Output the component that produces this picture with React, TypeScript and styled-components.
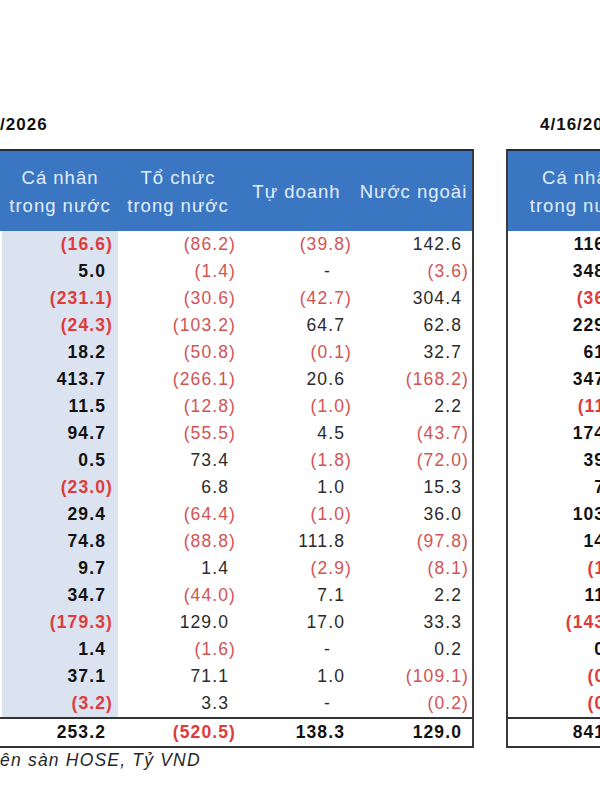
import React from "react";
import styled, { createGlobalStyle } from "styled-components";

const GlobalStyle = createGlobalStyle`
  html, body {
    margin: 0;
    padding: 0;
    background: #ffffff;
    overflow: hidden;
  }
  body {
    font-family: "Liberation Sans", Arial, sans-serif;
    color: #262626;
  }
`;

const heads = ["Cá nhân\ntrong nước", "Tổ chức\ntrong nước", "Tự doanh", "Nước ngoài"];

const leftRows = [
  ["(16.6)", "(86.2)", "(39.8)", "142.6"],
  ["5.0", "(1.4)", "-", "(3.6)"],
  ["(231.1)", "(30.6)", "(42.7)", "304.4"],
  ["(24.3)", "(103.2)", "64.7", "62.8"],
  ["18.2", "(50.8)", "(0.1)", "32.7"],
  ["413.7", "(266.1)", "20.6", "(168.2)"],
  ["11.5", "(12.8)", "(1.0)", "2.2"],
  ["94.7", "(55.5)", "4.5", "(43.7)"],
  ["0.5", "73.4", "(1.8)", "(72.0)"],
  ["(23.0)", "6.8", "1.0", "15.3"],
  ["29.4", "(64.4)", "(1.0)", "36.0"],
  ["74.8", "(88.8)", "111.8", "(97.8)"],
  ["9.7", "1.4", "(2.9)", "(8.1)"],
  ["34.7", "(44.0)", "7.1", "2.2"],
  ["(179.3)", "129.0", "17.0", "33.3"],
  ["1.4", "(1.6)", "-", "0.2"],
  ["37.1", "71.1", "1.0", "(109.1)"],
  ["(3.2)", "3.3", "-", "(0.2)"],
];
const leftTotal = ["253.2", "(520.5)", "138.3", "129.0"];

// previous session, only the first column shows inside the frame
const rightRows = [
  ["116.0", "(62.3)", "(18.4)", "(35.3)"],
  ["348.2", "(210.5)", "(4.1)", "(133.6)"],
  ["(36.7)", "12.9", "(3.0)", "26.8"],
  ["229.5", "(140.2)", "8.8", "(98.1)"],
  ["61.4", "(22.0)", "(1.2)", "(38.2)"],
  ["347.9", "(190.6)", "12.4", "(169.7)"],
  ["(11.3)", "4.2", "-", "7.1"],
  ["174.6", "(96.3)", "2.0", "(80.3)"],
  ["39.2", "(18.5)", "(0.4)", "(20.3)"],
  ["7.5", "(2.6)", "1.1", "(6.0)"],
  ["103.8", "(61.7)", "(2.2)", "(39.9)"],
  ["14.2", "(9.5)", "0.8", "(5.5)"],
  ["(1.9)", "3.4", "-", "(1.5)"],
  ["11.7", "(6.1)", "0.3", "(5.9)"],
  ["(143.5)", "88.2", "6.4", "48.9"],
  ["0.6", "(0.3)", "-", "(0.3)"],
  ["(0.4)", "0.9", "-", "(0.5)"],
  ["(0.8)", "0.5", "-", "0.3"],
];
const rightTotal = ["841.3", "(692.9)", "(8.2)", "(140.2)"];

const Page = styled.div`
  display: flex;
  align-items: flex-start;
  gap: 32px;
  width: max-content;
  margin-left: -80px;
  padding-top: 114px;
`;

const Block = styled.section`
  display: flex;
  flex-direction: column;
`;

const DateTitle = styled.h2<{ $indent: number }>`
  margin: 0 0 13px;
  padding-left: ${(p) => p.$indent}px;
  font-size: 17px;
  line-height: 22px;
  font-weight: 700;
  letter-spacing: 1px;
  color: #111111;
`;

const Table = styled.div<{ $cols: string; $edge: "left" | "right" }>`
  display: grid;
  grid-template-columns: ${(p) => p.$cols};
  border-top: 2px solid #1e2a44;
  border-bottom: 2px solid #333333;
  ${(p) => (p.$edge === "right" ? "border-right: 2px solid #3a3a3a;" : "border-left: 2px solid #3a3a3a;")}
`;

const HeadCell = styled.div`
  height: 80px;
  padding-top: 2px;
  box-sizing: border-box;
  display: flex;
  align-items: center;
  justify-content: center;
  background: #3a76c2;
  color: #e3eefb;
  font-size: 18.5px;
  line-height: 28px;
  letter-spacing: 1px;
  text-align: center;
  white-space: pre-line;
`;

const Cell = styled.div<{ $shade?: boolean; $pad: number; $total?: boolean }>`
  height: 27px;
  display: flex;
  align-items: center;
  justify-content: flex-end;
  padding-right: ${(p) => p.$pad}px;
  background: ${(p) => (p.$shade ? "#dbe3f1" : "transparent")};
  border-top: ${(p) => (p.$total ? "2px solid #333333" : "none")};
  font-size: 17.5px;
  letter-spacing: 1.1px;
`;

const Value = styled.span<{ $neg: boolean; $strong: boolean; $gap: number }>`
  padding-right: ${(p) => p.$gap}px;
  font-weight: ${(p) => (p.$strong ? 700 : 400)};
  color: ${(p) => (p.$neg ? (p.$strong ? "#df3b3b" : "#d25353") : p.$strong ? "#111111" : "#2b2b2b")};
`;

const Footnote = styled.p`
  display: flex;
  margin: 1px 0 0;
  font-size: 17.5px;
  line-height: 22px;
  font-style: italic;
  letter-spacing: 1.2px;
  color: #262626;
  white-space: nowrap;
`;

const Cut = styled.span`
  width: 80px;
  display: flex;
  justify-content: flex-end;
  overflow: hidden;
`;

function Num({ v, strong }: { v: string; strong: boolean }) {
  const neg = v.startsWith("(");
  const gap = v === "-" ? 21 : neg ? 0 : 7;
  return (
    <Value $neg={neg} $strong={strong} $gap={gap}>
      {v}
    </Value>
  );
}

type Spec = { pads: number[]; shadeFirst: boolean; label: boolean };

function DataTable({ rows, total, cols, edge, spec }: {
  rows: string[][];
  total: string[];
  cols: string;
  edge: "left" | "right";
  spec: Spec;
}) {
  return (
    <Table $cols={cols} $edge={edge}>
      {spec.label && <HeadCell />}
      {heads.map((h) => (
        <HeadCell key={h}>{h}</HeadCell>
      ))}
      {rows.map((r, i) => (
        <React.Fragment key={i}>
          {spec.label && <Cell $pad={0} />}
          {r.map((v, j) => (
            <Cell key={j} $pad={spec.pads[j]} $shade={spec.shadeFirst && j === 0}>
              <Num v={v} strong={j === 0} />
            </Cell>
          ))}
        </React.Fragment>
      ))}
      {spec.label && <Cell $pad={0} $total />}
      {total.map((v, j) => (
        <Cell key={j} $pad={spec.pads[j]} $total>
          <Num v={v} strong />
        </Cell>
      ))}
    </Table>
  );
}

export default function App() {
  return (
    <>
      <GlobalStyle />
      <Page>
        <Block>
          <DateTitle $indent={43}>4/17/2026</DateTitle>
          <DataTable
            rows={leftRows}
            total={leftTotal}
            cols="82px 116px 120px 117px 117px"
            edge="right"
            spec={{ pads: [5, 2, 3, 3], shadeFirst: true, label: true }}
          />
          <Footnote>
            <Cut>Nguồn: FiinPro, Giá trị giao dịch ròng tr</Cut>
            ên sàn HOSE, Tỷ VND
          </Footnote>
        </Block>
        <Block>
          <DateTitle $indent={34}>4/16/2026</DateTitle>
          <DataTable
            rows={rightRows}
            total={rightTotal}
            cols="145px 120px 117px 119px"
            edge="left"
            spec={{ pads: [24, 2, 3, 3], shadeFirst: false, label: false }}
          />
        </Block>
      </Page>
    </>
  );
}
